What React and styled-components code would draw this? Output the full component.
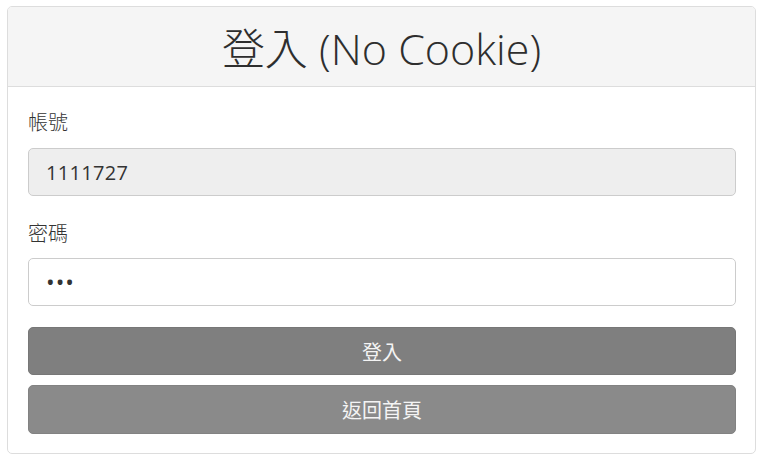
import React from 'react';
import styled, { createGlobalStyle } from 'styled-components';

const GlobalStyle = createGlobalStyle`
  body {
    margin: 0;
    background: #ffffff;
    font-family: 'Open Sans', 'Noto Sans CJK TC', sans-serif;
    color: #333333;
  }
`;

const Page = styled.div`
  padding: 6px 6px 6px 7px;
`;

const Card = styled.div`
  width: 749px;
  box-sizing: border-box;
  border: 1px solid #dddddd;
  border-radius: 5px;
  background: #ffffff;
  overflow: hidden;
`;

const Header = styled.div`
  height: 79px;
  background: #f5f5f5;
  border-bottom: 1px solid #dddddd;
  display: flex;
  align-items: center;
  justify-content: center;
`;

const Title = styled.h3`
  margin: 0;
  font-size: 43px;
  font-weight: 300;
  color: #2e2e2e;
  font-family: 'Open Sans', 'Noto Sans CJK TC', sans-serif;
`;

const Body = styled.div`
  padding: 22px 19px 19px 20px;
  display: flex;
  flex-direction: column;
`;

const Field = styled.div`
  display: flex;
  flex-direction: column;
  margin-bottom: ${(p) => p.$gap}px;
`;

const Label = styled.label`
  font-size: 20px;
  line-height: 28px;
  font-weight: 300;
  color: #333333;
  margin-bottom: ${(p) => p.$gap}px;
`;

const Input = styled.input`
  box-sizing: border-box;
  height: 48px;
  width: 100%;
  padding: 0 17px;
  font-family: 'Open Sans', sans-serif;
  font-size: ${(p) => (p.type === 'password' ? '23px' : '20px')};
  color: #333333;
  letter-spacing: ${(p) => (p.type === 'password' ? '1px' : '0.3px')};
  border: 1px solid #cccccc;
  border-radius: 5px;
  background: ${(p) => (p.readOnly ? '#eeeeee' : '#ffffff')};
  outline: none;
`;

const Buttons = styled.div`
  display: flex;
  flex-direction: column;
  gap: 10px;
`;

const Button = styled.button`
  height: 48px;
  width: 100%;
  border: 1px solid ${(p) => p.$border};
  border-radius: 5px;
  background: ${(p) => p.$bg};
  color: #f4f4f4;
  font-size: 20px;
  font-family: 'Open Sans', 'Noto Sans CJK TC', sans-serif;
  cursor: pointer;

  &:last-child {
    height: 49px;
  }
`;

export default function App() {
  return (
    <Page>
      <GlobalStyle />
      <Card>
        <Header>
          <Title>登入 (No Cookie)</Title>
        </Header>
        <Body>
          <Field $gap={24}>
            <Label $gap={11}>帳號</Label>
            <Input readOnly value="1111727" />
          </Field>
          <Field $gap={21}>
            <Label $gap={10}>密碼</Label>
            <Input type="password" defaultValue="abc" />
          </Field>
          <Buttons>
            <Button $bg="#7f7f7f" $border="#777777">登入</Button>
            <Button $bg="#8a8a8a" $border="#828282">返回首頁</Button>
          </Buttons>
        </Body>
      </Card>
    </Page>
  );
}
